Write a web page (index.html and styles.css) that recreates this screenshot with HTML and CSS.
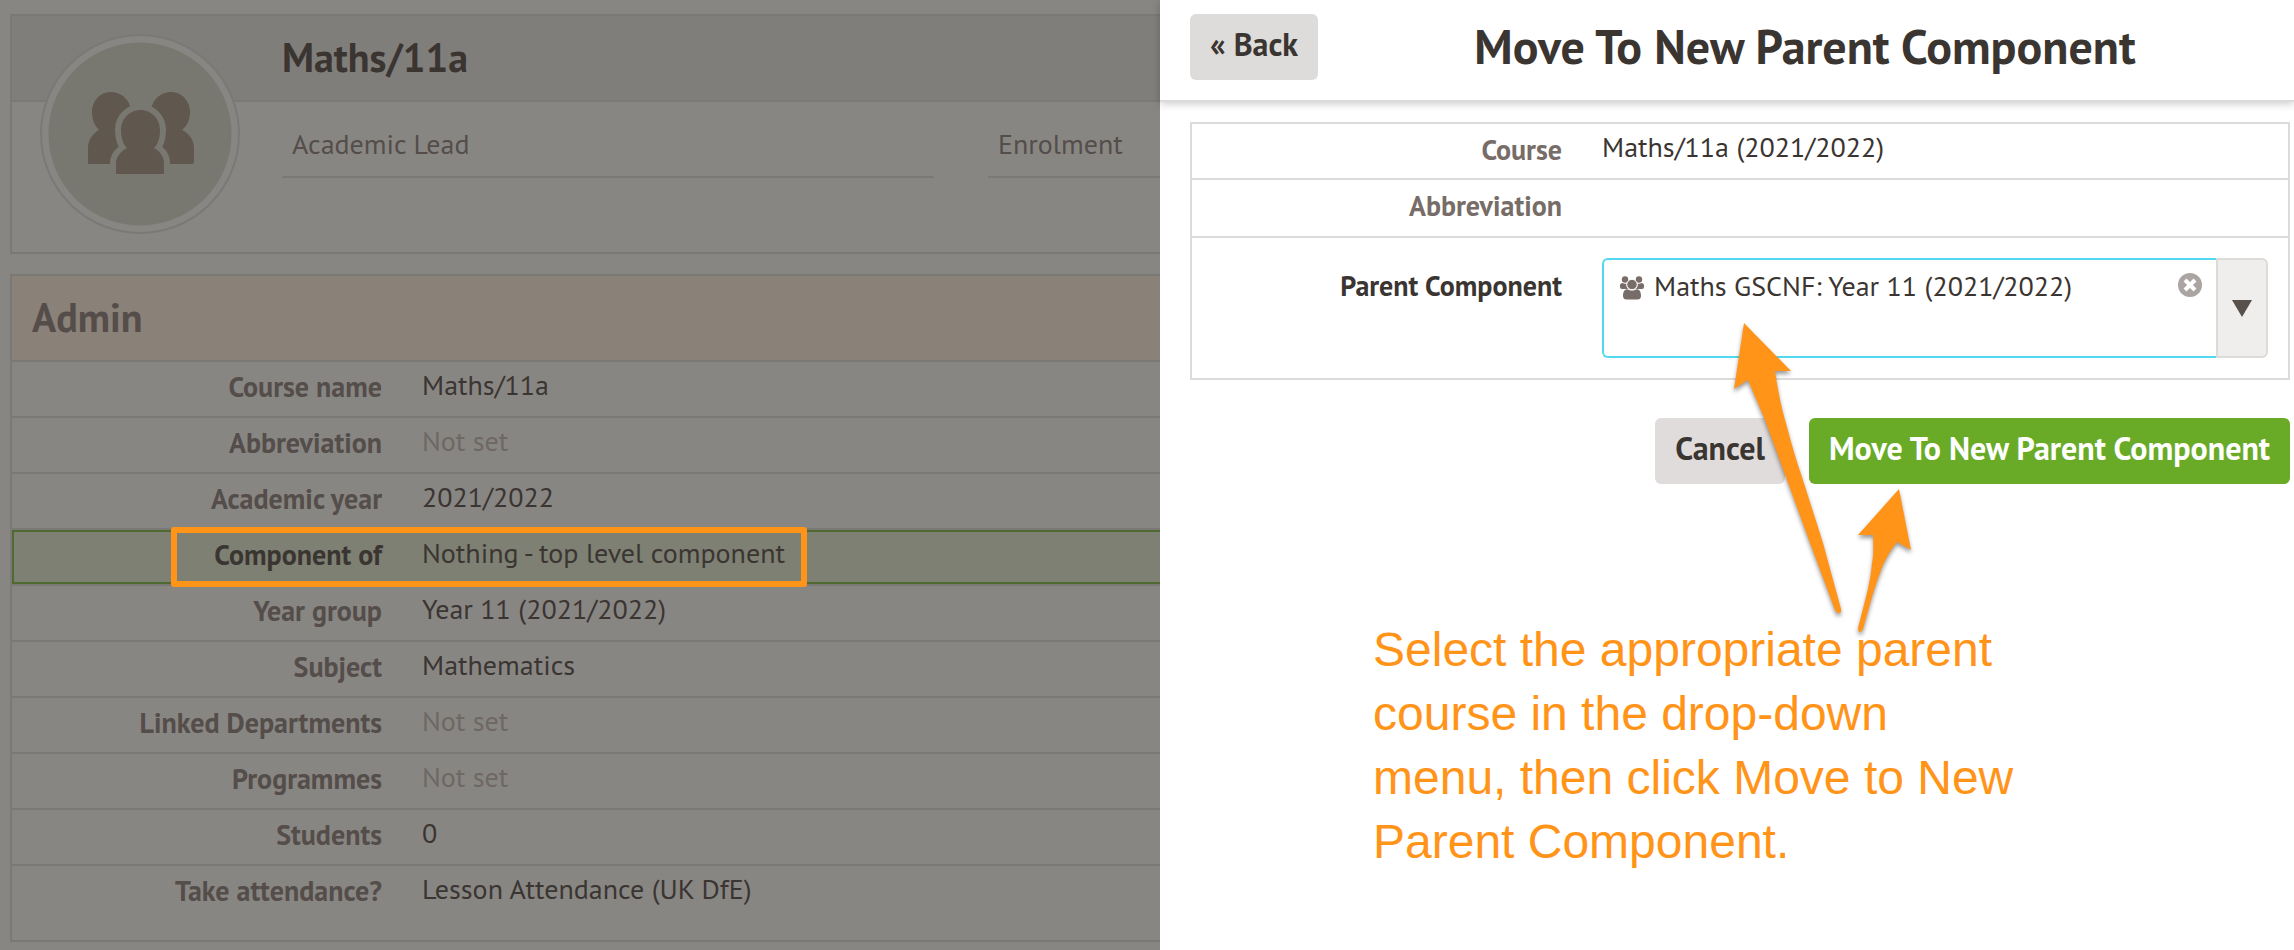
FILE: index.html
```html
<!DOCTYPE html>
<html lang="en">
<head>
<meta charset="utf-8">
<title>Move To New Parent Component</title>
<link rel="stylesheet" href="styles.css">
</head>
<body>
<div class="layout">
  <main class="page">
    <section class="card profile">
      <header class="profile-head"><h1 class="profile-title">Maths/11a</h1></header>
      <div class="profile-fields">
        <div class="field">Academic Lead</div>
        <div class="field">Enrolment</div>
      </div>
      <div class="avatar">
        <svg class="avatar-icon" viewBox="0 0 108 84" aria-hidden="true">
          <g class="back-people">
            <path d="M25 0C36 0 45 9 45 20C45 28 42 34 37 38C42 42 44 48 44 55V72H2V56C2 48 7 41 13 38C8 33 6 27 6 20C6 9 14 0 25 0Z"/>
            <path d="M85 0C74 0 65 9 65 20C65 28 68 34 73 38C68 42 66 48 66 55V72H106Q108 72 108 70V56C108 48 103 41 96 38C102 33 104 27 104 20C104 9 96 0 85 0Z"/>
          </g>
          <path class="front-person" d="M54.500 18C65.500 18 74 27 74 38C74 46 72 52 68 56C74 59 78 65 78 71V82H30V71C30 65 35 59 41 56C37 52 35 46 35 38C35 27 43.500 18 54.500 18Z"/>
        </svg>
      </div>
    </section>

    <section class="card admin">
      <h2 class="admin-title">Admin</h2>
      <dl class="details">
        <div class="row"><dt>Course name</dt><dd>Maths/11a</dd></div>
        <div class="row"><dt>Abbreviation</dt><dd class="unset">Not set</dd></div>
        <div class="row"><dt>Academic year</dt><dd>2021/2022</dd></div>
        <div class="row selected"><dt>Component of</dt><dd>Nothing - top level component</dd></div>
        <div class="row"><dt>Year group</dt><dd>Year 11 (2021/2022)</dd></div>
        <div class="row"><dt>Subject</dt><dd>Mathematics</dd></div>
        <div class="row"><dt>Linked Departments</dt><dd class="unset">Not set</dd></div>
        <div class="row"><dt>Programmes</dt><dd class="unset">Not set</dd></div>
        <div class="row"><dt>Students</dt><dd>0</dd></div>
        <div class="row"><dt>Take attendance?</dt><dd>Lesson Attendance (UK DfE)</dd></div>
      </dl>
    </section>
  </main>

  <section class="panel">
    <header class="panel-head">
      <button class="btn" type="button">« Back</button>
      <h2 class="panel-title">Move To New Parent Component</h2>
    </header>
    <form class="panel-body">
      <div class="form-table">
        <div class="form-row"><span class="form-label">Course</span><span class="form-value">Maths/11a (2021/2022)</span></div>
        <div class="form-row tall"><span class="form-label">Abbreviation</span><span class="form-value"></span></div>
        <div class="form-row picker-row">
          <label class="form-label strong" for="parent">Parent Component</label>
          <div class="picker">
            <div class="picker-box">
              <svg class="group-icon" viewBox="0 0 24 24" aria-hidden="true">
                <circle cx="5" cy="3.500" r="3.200"/><circle cx="19" cy="3.500" r="3.200"/>
                <path d="M2 13Q0 13 0 11V9.500C0 8 1 7 2.500 7C4 8 5.500 8 6.600 7.400C6.300 9.800 6.900 11.500 8 13Z"/>
                <path d="M22 13Q24 13 24 11V9.500C24 8 23 7 21.500 7C20 8 18.500 8 17.400 7.400C17.700 9.800 17.100 11.500 16 13Z"/>
                <path d="M7.500 13.300C10 15 14 15 16.500 13.300C19.500 13.300 21 16 21 20C21 22.500 19.500 23.500 17.500 23.500H6.500C4.500 23.500 3 22.500 3 20C3 16 4.500 13.300 7.500 13.300Z"/>
                <circle class="group-head" cx="12" cy="8.500" r="5.200"/>
              </svg>
              <input class="picker-input" id="parent" type="text" value="Maths GSCNF: Year 11 (2021/2022)">
              <button class="clear" type="button" aria-label="Clear">
                <svg class="clear-icon" viewBox="0 0 24 24" aria-hidden="true"><circle cx="12" cy="12" r="12"/><path d="M7 7L17 17M17 7L7 17"/></svg>
              </button>
            </div>
            <button class="toggle" type="button" aria-label="Show options">
              <svg class="toggle-icon" viewBox="0 0 20 17" aria-hidden="true"><path d="M0 0H20L10 17Z"/></svg>
            </button>
          </div>
        </div>
      </div>
      <div class="actions">
        <button class="btn cancel" type="button">Cancel</button>
        <button class="btn primary" type="submit">Move To New Parent Component</button>
      </div>
    </form>
    <p class="note">Select the appropriate parent<br>course in the drop-down<br>menu, then click Move to New<br>Parent Component.</p>
    <svg class="arrows" viewBox="0 0 190 320" aria-hidden="true">
      <path d="M14 3L61 51L45 51Q49 80 57 107Q64 134 72 157L93 223L111 289Q112 293 108 293Q106 293 105 290L80 223L57 160L35 100L18 60L4 69Z"/>
      <path d="M169 169L128 215L143 215Q144 235 142 243Q141 256 137 273L128 308Q128 312 130 312Q132 312 133 309L142 277Q147 260 153 245Q159 232 167 222L181 230Z"/>
    </svg>
  </section>
</div>
</body>
</html>
```
FILE: styles.css
```css
*, *::after { box-sizing: border-box; }

body {
  margin: 0;
  font-family: "PT Sans", Lato, "Open Sans", sans-serif;
  font-size: 28px;
  line-height: 36px;
  color: #3b3532;
  background: #888683;
}

h1, h2, p, dl, dd { margin: 0; }

.layout {
  display: grid;
  grid-template-columns: 1160fr 1134fr;
  min-height: 100vh;
}

/* Dimmed record page */
.page {
  display: flex;
  flex-direction: column;
  gap: 20px;
  padding: 14px 0 8px 10px;
  background: #888683;
  overflow: hidden;
}

.card {
  position: relative;
  border: 2px solid #7b7976;
  border-right: 0;
}

.profile { min-height: 240px; }

.profile-head {
  height: 86px;
  padding: 17px 0 0 270px;
  background: #807e7b;
  border-bottom: 2px solid #7b7976;
}

.profile-title, .admin-title {
  font-size: 40px;
  line-height: 48px;
  font-weight: 700;
}

.profile-fields {
  display: grid;
  grid-template-columns: 652fr 172fr;
  gap: 54px;
  padding-left: 270px;
}

.field {
  height: 76px;
  padding: 24px 10px 0;
  color: #544d4a;
  border-bottom: 2px solid #7b7976;
}

.avatar {
  position: absolute;
  left: 28px;
  top: 18px;
  display: flex;
  align-items: center;
  justify-content: center;
  width: 200px;
  height: 200px;
  border: 2px solid #7b7976;
  border-radius: 50%;
  background: radial-gradient(circle, #797870 91px, #888683 92px);
}

.avatar-icon { width: 108px; height: 84px; fill: #60574f; }
.front-person { stroke: #797870; stroke-width: 12px; paint-order: stroke; }

.admin { flex: 1; }

.admin-title {
  height: 86px;
  padding: 17px 20px 0;
  color: #544d4a;
  background: #8a8179;
  border-bottom: 2px solid #7b7976;
}

.row {
  position: relative;
  display: grid;
  grid-template-columns: 370px 1fr;
  gap: 40px;
  height: 56px;
  border-bottom: 2px solid #7b7976;
}

.row:last-child { border-bottom: 0; }

.row dt {
  padding-top: 7px;
  text-align: right;
  font-weight: 700;
  color: #544d4a;
}

.row dd { padding-top: 5px; }
.row .unset { color: #6e6865; }

.selected {
  background: #7d8072;
  box-shadow: inset 2px 2px #4f6a30, inset 0 -2px #4f6a30;
}

.row.selected dt { color: #3b3532; }

.selected::after {
  content: "";
  position: absolute;
  left: 159px;
  top: -3px;
  width: 636px;
  height: 60px;
  border: 6px solid #ff9419;
  border-radius: 3px;
}

/* Side panel */
.panel {
  position: relative;
  background: #fff;
}

.panel-head {
  display: flex;
  align-items: flex-start;
  height: 102px;
  padding: 14px 2px 0 30px;
  border-bottom: 2px solid #dcdbda;
  box-shadow: 0 2px 8px rgba(0, 0, 0, 0.2);
}

.panel-title {
  flex: 1;
  text-align: center;
  font-size: 48px;
  line-height: 64px;
}

.btn {
  height: 66px;
  padding: 0 20px 6px;
  font: 700 32px/40px "PT Sans", Lato, "Open Sans", sans-serif;
  color: #3b3532;
  background: #dddcda;
  border: 0;
  border-radius: 6px;
}

.cancel { background: #e0dcdb; }
.primary { color: #fff; background: #69ab26; }

.panel-body { padding: 20px 4px 0 30px; }

.form-table { border: 2px solid #dcdbdb; }

.form-row {
  display: grid;
  grid-template-columns: 370px 1fr;
  gap: 40px;
  min-height: 56px;
  border-bottom: 2px solid #dcdbdb;
}

.form-row:last-child { border-bottom: 0; }
.tall { min-height: 58px; }

.form-label {
  padding-top: 8px;
  text-align: right;
  font-weight: 700;
  color: #776c67;
}

.form-value { padding-top: 5px; }
.strong { padding-top: 30px; color: #3b3532; }

.picker {
  display: flex;
  height: 100px;
  margin: 20px 20px 20px 0;
}

.picker-box {
  flex: 1;
  display: flex;
  align-items: flex-start;
  gap: 10px;
  padding: 8px 14px 0 16px;
  border: 2px solid #51d9f0;
  border-right: 0;
  border-radius: 6px 0 0 6px;
}

.group-icon { width: 24px; height: 24px; margin-top: 8px; fill: #776c67; }
.group-head { stroke: #fff; stroke-width: 1px; }

.picker-input {
  flex: 1;
  min-width: 0;
  height: 36px;
  padding: 0;
  font: inherit;
  color: inherit;
  background: none;
  border: 0;
  outline: 0;
}

.clear {
  height: 24px;
  margin-top: 5px;
  padding: 0;
  background: none;
  border: 0;
}

.clear-icon {
  display: block;
  width: 24px;
  height: 24px;
  fill: #aaa5a2;
  stroke: #fff;
  stroke-width: 4px;
}

.clear-icon circle { stroke: none; }

.toggle {
  width: 52px;
  padding: 4px 0 0;
  background: #efeeec;
  border: 2px solid #dcdbda;
  border-radius: 0 6px 6px 0;
}

.toggle-icon { width: 20px; height: 17px; fill: #57504b; }

.actions {
  display: flex;
  justify-content: flex-end;
  gap: 24px;
  margin-top: 38px;
}

/* Callout */
.note {
  margin: 134px 0 0 213px;
  font-family: "Liberation Sans", Arial, sans-serif;
  font-size: 48px;
  line-height: 64px;
  color: #ff9419;
}

.arrows {
  position: absolute;
  left: 570px;
  top: 320px;
  width: 190px;
  height: 320px;
  fill: #ff9419;
  filter: drop-shadow(0 3px 2px rgba(0, 0, 0, 0.4));
}
```
